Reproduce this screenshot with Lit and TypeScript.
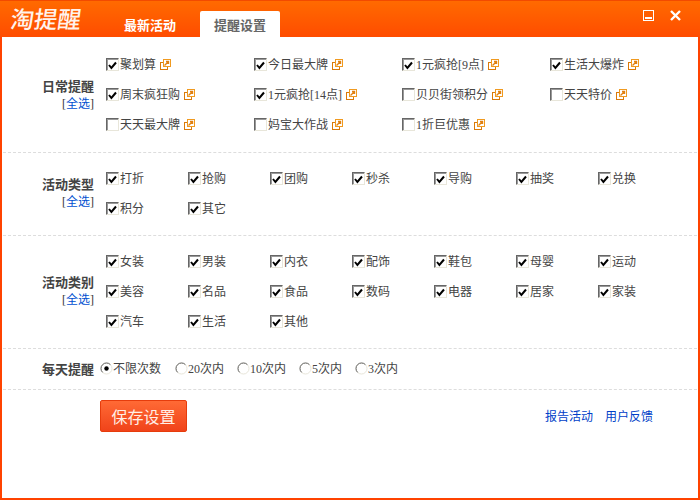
import { LitElement, html, css, svg } from "lit";
import { customElement } from "lit/decorators.js";

const daily: [string, boolean][] = [
  ["聚划算", true], ["今日最大牌", true], ["1元疯抢[9点]", true], ["生活大爆炸", true],
  ["周末疯狂购", true], ["1元疯抢[14点]", true], ["贝贝街领积分", false], ["天天特价", false],
  ["天天最大牌", false], ["妈宝大作战", false], ["1折巨优惠", false],
];
const types = ["打折", "抢购", "团购", "秒杀", "导购", "抽奖", "兑换", "积分", "其它"];
const cats = ["女装", "男装", "内衣", "配饰", "鞋包", "母婴", "运动", "美容", "名品", "食品", "数码", "电器", "居家", "家装", "汽车", "生活", "其他"];
const radios = ["不限次数", "20次内", "10次内", "5次内", "3次内"];

const extIcon = svg`<svg class="ext" width="11" height="11" viewBox="0 0 11 11">
  <rect x="0.5" y="3.5" width="7" height="7" fill="#fff" stroke="#d97a0a"/>
  <rect x="3.5" y="0.5" width="7" height="7" fill="#fff" stroke="#f09a20"/>
  <path d="M4.5 6.5 L8 3 M6 2.5 H8.5 V5" fill="none" stroke="#e08010" stroke-width="1.4"/>
</svg>`;

@customElement("app-root")
export class AppRoot extends LitElement {
  static styles = css`
    :host {
      display: block;
      width: 700px;
      height: 500px;
      font: 12px/16px "Liberation Serif", "Noto Sans CJK SC", sans-serif;
      color: #444;
    }
    .win {
      box-sizing: border-box;
      width: 700px;
      height: 500px;
      border: 2px solid #ff4300;
      border-top: 0;
      background: #fff;
      display: flex;
      flex-direction: column;
    }
    .head {
      height: 37px;
      flex: none;
      margin: 0 -2px;
      background: linear-gradient(#ff6a00, #ff4c00);
      border-top: 1px solid #f24a00;
      box-sizing: border-box;
      display: flex;
      align-items: flex-end;
      position: relative;
    }
    .logo {
      position: absolute;
      left: 9px;
      top: 3px;
      font: 500 23.5px/28px "Noto Sans CJK SC", sans-serif;
      color: #fff3ec;
      transform: skewX(-8deg);
      transform-origin: left bottom;
    }
    .tabs { display: flex; margin-left: 110px; gap: 10px; }
    .tab {
      width: 80px;
      height: 26px;
      text-align: center;
      font: 700 13px/27px "Noto Sans CJK SC", sans-serif;
      color: #fff;
    }
    .tab.on {
      background: #fff;
      color: #666;
      border-radius: 2px 2px 0 0;
    }
    .ctl {
      position: absolute;
      right: 18px;
      top: 9px;
      display: flex;
      gap: 15px;
      align-items: center;
    }
    .sec {
      display: flex;
      flex: none;
      box-sizing: border-box;
      border-bottom: 1px dashed #ddd;
      margin-left: 1px;
      margin-right: 1px;
    }
    .s1 { height: 116px; padding-top: 19px; }
    .s2 { height: 83px; padding-top: 17px; }
    .s3 { height: 113px; padding-top: 17px; }
    .s4 { height: 41px; align-items: center; padding-top: 0; }
    .lbl {
      width: 92px;
      flex: none;
      text-align: right;
      box-sizing: border-box;
      padding-right: 1px;
    }
    .lbl b {
      display: block;
      font: 700 13px/18px "Noto Sans CJK SC", sans-serif;
      color: #444;
    }
    .lbl a { display: block; font-size: 12px; line-height: 16px; color: #333; margin-top: 1px; }
    .lbl a span { color: #0050d0; }
    .s1 .lbl { padding-top: 21px; }
    .s2 .lbl { padding-top: 5px; }
    .s3 .lbl { padding-top: 20px; }
    .grid { margin-left: 11px; display: grid; grid-auto-rows: 30px; }
    .g4 { grid-template-columns: repeat(4, 148px); }
    .g7 { grid-template-columns: repeat(7, 82px); }
    .it { display: flex; align-items: center; height: 16px; white-space: nowrap; }
    .it > span { padding-top: 2px; }
    .cb {
      box-sizing: border-box;
      width: 13px;
      height: 13px;
      flex: none;
      margin-right: 1px;
      background: #fff;
      border: 1px solid;
      border-color: #666 #e8e6da #e8e6da #666;
      box-shadow: inset 1px 1px 0 #999;
      display: flex;
      align-items: center;
      justify-content: center;
    }
    .ext { margin-left: 4px; flex: none; }
    .radios { display: flex; margin-left: 5px; padding-bottom: 1px; }
    .r { display: flex; align-items: center; white-space: nowrap; margin-right: 13px; }
    .r:first-child { margin-right: 14px; }
    .rb { width: 13px; height: 13px; flex: none; }
    .foot {
      display: flex;
      align-items: flex-start;
      padding: 10px 45px 0 98px;
    }
    .save {
      width: 87px;
      height: 32px;
      box-sizing: border-box;
      border: 1px solid #e63c0c;
      border-radius: 2px;
      background: linear-gradient(#ff6a35, #f0431a);
      color: #ffeee6;
      font: 16px/30px "Noto Sans CJK SC", sans-serif;
      text-align: center;
    }
    .links { margin-left: auto; display: flex; gap: 12px; padding-top: 9px; color: #0040c8; }
  `;

  private cb(on: boolean) {
    return html`<span class="cb">${on
      ? svg`<svg width="9" height="9" viewBox="0 0 9 9"><path d="M1 4 L3.4 7 L8 1.5" fill="none" stroke="#000" stroke-width="2"/></svg>`
      : ""}</span>`;
  }

  private rb(on: boolean) {
    return html`<svg class="rb" viewBox="0 0 13 13">
      <circle cx="6.5" cy="6.5" r="5.5" fill="#fff" stroke="#e8e6da"/>
      <path d="M2.6 10.4 A5.5 5.5 0 0 1 10.4 2.6" fill="none" stroke="#666"/>
      ${on ? svg`<circle cx="6.5" cy="6.5" r="2.2" fill="#000"/>` : ""}
    </svg>`;
  }

  private plain(list: string[]) {
    return html`<div class="grid g7">
      ${list.map((t) => html`<div class="it">${this.cb(true)}<span>${t}</span></div>`)}
    </div>`;
  }

  render() {
    return html`<div class="win">
      <div class="head">
        <div class="logo">淘提醒</div>
        <div class="tabs">
          <div class="tab">最新活动</div>
          <div class="tab on">提醒设置</div>
        </div>
        <div class="ctl">
          <svg width="11" height="11" viewBox="0 0 11 11"><rect x="0.5" y="0.5" width="10" height="10" fill="none" stroke="#fff"/><rect x="2" y="7" width="7" height="2" fill="#fff"/></svg>
          <svg width="13" height="11" viewBox="0 0 13 11"><path d="M2 1 L11 10 M11 1 L2 10" stroke="#fff" stroke-width="2.4" fill="none"/></svg>
        </div>
      </div>
      <div class="sec s1">
        <div class="lbl"><b>日常提醒</b><a>[<span>全选</span>]</a></div>
        <div class="grid g4">
          ${daily.map(([t, on]) => html`<div class="it">${this.cb(on)}<span>${t}</span>${extIcon}</div>`)}
        </div>
      </div>
      <div class="sec s2">
        <div class="lbl"><b>活动类型</b><a>[<span>全选</span>]</a></div>
        ${this.plain(types)}
      </div>
      <div class="sec s3">
        <div class="lbl"><b>活动类别</b><a>[<span>全选</span>]</a></div>
        ${this.plain(cats)}
      </div>
      <div class="sec s4">
        <div class="lbl"><b>每天提醒</b></div>
        <div class="radios">
          ${radios.map((t, i) => html`<div class="r">${this.rb(i === 0)}<span>${t}</span></div>`)}
        </div>
      </div>
      <div class="foot">
        <div class="save">保存设置</div>
        <div class="links"><span>报告活动</span><span>用户反馈</span></div>
      </div>
    </div>`;
  }
}
